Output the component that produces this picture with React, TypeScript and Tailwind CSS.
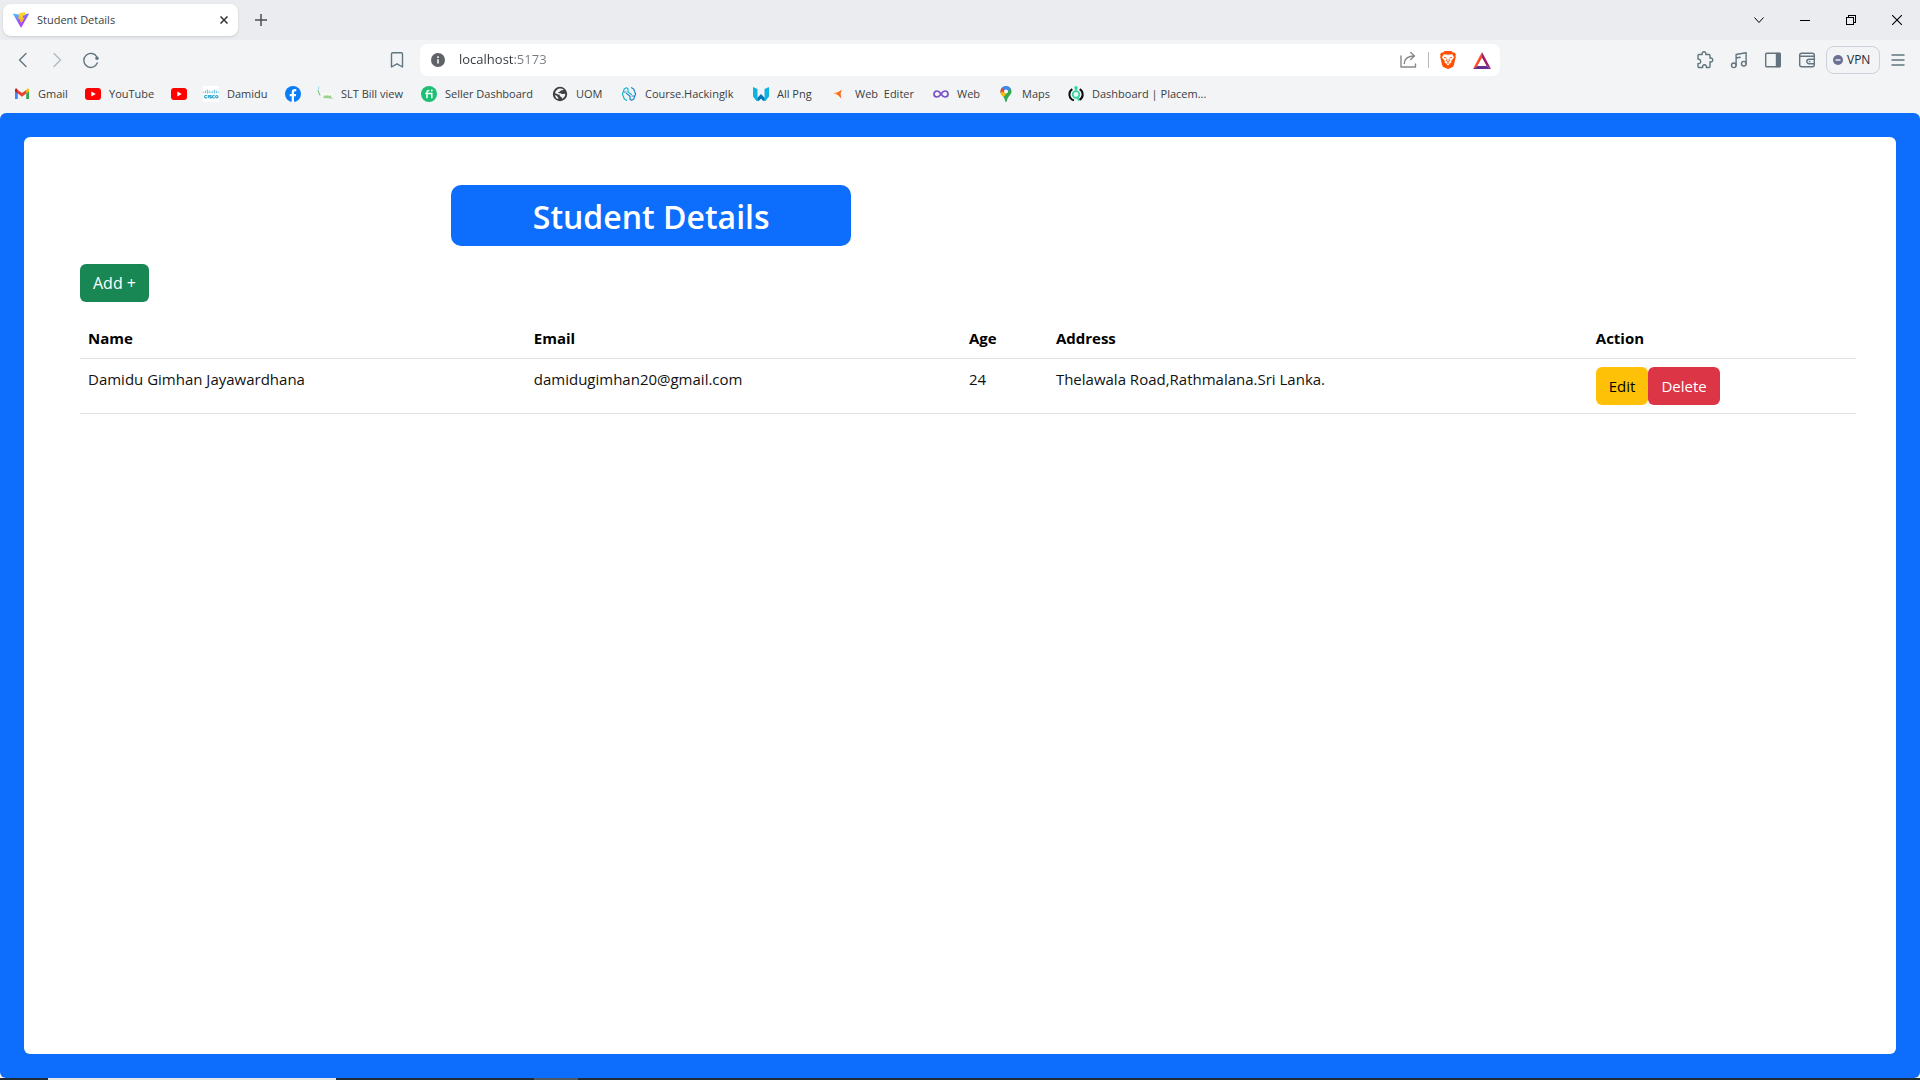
import React from "react";

type IconProps = { className?: string };

const ViteLogo = () => (
  <svg viewBox="0 0 16 16" className="size-4">
    <defs>
      <linearGradient id="viteBody" x1="0" y1="0" x2="0.6" y2="1">
        <stop offset="0" stopColor="#41d1ff" />
        <stop offset="0.55" stopColor="#8f5bff" />
        <stop offset="1" stopColor="#bd34fe" />
      </linearGradient>
      <linearGradient id="viteBolt" x1="0" y1="0" x2="0" y2="1">
        <stop offset="0" stopColor="#ffdd35" />
        <stop offset="1" stopColor="#ffa800" />
      </linearGradient>
    </defs>
    <path d="M0.3 1.6 8 3l7.700-1.400c.3 0 .4.3.3.5L8.400 15.300c-.2.300-.5.300-.7 0L0 2.100c-.1-.2.1-.5.300-.5z" fill="url(#viteBody)" />
    <path d="M11.800 0 6 1.200 5.300 7.200l2.100-.4-.5 3.100 1.500-.4-1 3.300 4.200-7-2.200.3.900-2.700 2.100-.4z" fill="url(#viteBolt)" />
  </svg>
);

const GmailLogo = () => (
  <svg viewBox="0 0 16 16" className="size-4">
    <path d="M1 3.500V13h2.800V6.600z" fill="#4285f4" />
    <path d="M12.200 6.600V13H15V4z" fill="#34a853" />
    <path d="M12.200 3.900v3.600L15 5.400V4c0-1.500-1.300-1.900-2.200-1z" fill="#fbbc04" />
    <path d="M3.800 7.500V3.900L8 7l4.200-3.100v3.600L8 10.700z" fill="#ea4335" />
    <path d="M1 4v1.400l2.800 2.100V3.900L3.200 3C2.200 2.200 1 2.600 1 4z" fill="#c5221f" />
  </svg>
);

const YouTubeLogo = () => (
  <svg viewBox="0 0 16 16" className="size-4">
    <rect x="0" y="2" width="16" height="12" rx="3" fill="#f00" />
    <path d="M6.300 5.400v5.200L10.800 8z" fill="#fff" />
  </svg>
);

const CiscoLogo = () => (
  <svg viewBox="0 0 16 16" className="size-4">
    <rect width="16" height="16" fill="#fff" />
    <g stroke="#59b9dc" strokeWidth="0.9">
      <path d="M0.800 5.500v1.500M2.600 4.600v2.600M4.400 3.600v4M6.200 4.600v2.600M8 5.500v1.500M9.800 4.600v2.600M11.600 3.600v4M13.400 4.600v2.600M15.200 5.500v1.500" />
    </g>
    <g fill="none" stroke="#2aa5d2" strokeWidth="1.200">
      <path d="M4 9.500H2.700a1.200 1.200 0 0 0 0 2.400H4M5.300 9v3.300M8.600 9.500H7c-.7 0-.7 1.100 0 1.200l.9.100c.8.100.8 1.200 0 1.200H6.500M11.600 9.500h-1a1.200 1.200 0 0 0 0 2.400h1" />
      <circle cx="13.800" cy="10.700" r="1.200" />
    </g>
  </svg>
);

const FacebookLogo = () => (
  <svg viewBox="0 0 16 16" className="size-4">
    <circle cx="8" cy="8" r="8" fill="#0a7cf5" />
    <path d="M6.700 15.900V10.300H4.700V8h2V6.200c0-2 1.200-3.100 3-3.100.6 0 1.300.1 1.600.2v1.900h-1c-1 0-1.300.6-1.300 1.200V8h2.200l-.4 2.300H9v5.600a8 8 0 0 1-2.300 0z" fill="#fff" />
  </svg>
);

const SltLogo = () => (
  <svg viewBox="0 0 16 16" className="size-4">
    <rect x="5" y="7" width="11" height="6" fill="#f8faf8" />
    <path d="M1.200 4.500 1.800.5" stroke="#8fd3ec" strokeWidth="0.900" />
    <path d="M1 4.500l2 5" stroke="#65c465" strokeWidth="1" />
    <path d="M6.500 12.300 7.800 9.500l1 2.800 1-2.800 1.200 2.800V9.500l1.500 2.800 1-2.800v2.800h2M6.500 11h8" fill="none" stroke="#8ecb83" strokeWidth="0.900" />
  </svg>
);

const FiverrLogo = () => (
  <svg viewBox="0 0 16 16" className="size-4">
    <circle cx="8" cy="8" r="8" fill="#1dbf73" />
    <path d="M6 12.300V6.300C6 5 6.700 4.300 8.300 4.400M4.300 7.400h6.500v4.900" fill="none" stroke="#fff" strokeWidth="1.500" />
    <circle cx="10.800" cy="4.600" r="1" fill="#fff" />
  </svg>
);

const GlobeLogo = () => (
  <svg viewBox="0 0 16 16" className="size-4">
    <circle cx="8" cy="8" r="7.200" fill="#3c4043" />
    <path d="M7.500 2.600c1.500-.3 3 .1 4.200 1-.6.900-1.500.8-2.500.9-.9.200-.8.900-1.500 1.200-.8.300-1.400.2-1.500.9 0 .7 1.200.7 2.100.6.900 0 1 .7 1.700.8.900.1 1.400-.5 2.300-.3.600.2 1 .500 1 .9-.2 1.700-1.400 3.300-3 4.100-.6-.2-.4-1.100-.9-1.600-.6-.6-1.500-.5-1.600-1.300 0-.9-.4-1.200-1.400-1.300C5 8.300 4.200 7.400 3 7.300c.3-2.300 2.200-4.300 4.500-4.700z" fill="#f2f4f6" />
    <path d="M3 9.200c1 0 1.900.5 2.300 1.300.3.700 1.100.800 1.100 1.600 0 .5-.2.900-.5 1C4.300 12.400 3.100 11 3 9.200z" fill="#f2f4f6" />
  </svg>
);

const HackingLogo = () => (
  <svg viewBox="0 0 16 16" className="size-4" fill="none" strokeLinecap="round" strokeLinejoin="round" strokeWidth="1.200">
    <path d="M5.500 14.300 3.300 13 2.400 10.500 1.400 8l1-2.500.8-2.500 2.200-1.300 1.600 1v3.200l3.600 2.600" stroke="#16bccb" />
    <path d="M10.500 1.700 12.700 3l.9 2.500 1 2.500-1 2.500-.8 2.500-2.200 1.300-1.600-1v-3L5.400 7.400M3 6h2M13 10h-2" stroke="#2385c9" />
  </svg>
);

const AllPngLogo = () => (
  <svg viewBox="0 0 16 16" className="size-4">
    <path d="M0 1l4.500 2v9L8 8.500l3.500 3.500V3L16 1v9.500L12.500 15h-2L8 12.500 5.500 15h-2L0 10.500z" fill="#10b3e0" />
    <path d="m4.300 12 3.700-4 3.700 4L10.500 15 8 12.500 5.500 15z" fill="#0873b9" />
  </svg>
);

const EditerLogo = () => (
  <svg viewBox="0 0 16 16" className="size-4">
    <path d="M2.300 7.300 8 5.800v3.800z" fill="#ffa033" />
    <path d="M10.800 3.500 5.500 7.600l4.800 4.900-.7-4.800z" fill="#ff6a1a" />
  </svg>
);

const InfinityLogo = () => (
  <svg viewBox="0 0 16 16" className="size-4">
    <path d="M8 8C6.500 5.800 5.500 5 4 5a3 3 0 0 0 0 6c1.500 0 2.500-.8 4-3s2.500-3 4-3a3 3 0 0 1 0 6c-1.500 0-2.500-.8-4-3z" fill="none" stroke="#7a4fc9" strokeWidth="1.700" />
  </svg>
);

const MapsLogo = () => (
  <svg viewBox="0 0 16 16" className="size-4">
    <defs>
      <clipPath id="pin">
        <path d="M8 0a5.500 5.500 0 0 1 5.500 5.500c0 3.200-3.700 4.700-4.600 9.200-.3 1.700-1.500 1.700-1.800 0C6.200 10.200 2.500 8.700 2.500 5.500A5.500 5.500 0 0 1 8 0z" />
      </clipPath>
    </defs>
    <g clipPath="url(#pin)">
      <rect width="16" height="16" fill="#34a853" />
      <path d="M2 7 6 6l2 2-3.500 4z" fill="#fbbc04" />
      <path d="M2 7.500V3l2-1.500L8 5 4.500 9z" fill="#ea4335" />
      <path d="M2 7.500 4.500 5.500 8 8l-3.500 4z" fill="#fbbc04" />
      <path d="M3.500 1.500 8 5.500 13 3 11 0H5z" fill="#4285f4" />
    </g>
    <circle cx="8" cy="5.500" r="2" fill="#fff" />
  </svg>
);

const PlacementLogo = () => (
  <svg viewBox="0 0 16 16" className="size-4" fill="none">
    <path d="M4.300 3.200a6.200 6.200 0 0 0 1.700 11.200M11.700 3.200a6.200 6.200 0 0 1-.2 10.700" stroke="#0b0b0b" strokeWidth="2" />
    <circle cx="8" cy="8.500" r="3.300" stroke="#2fd6a0" strokeWidth="1.700" />
    <path d="M8 2v3M9.500 11l1.200 3.800" stroke="#2fd6a0" strokeWidth="1.600" />
    <circle cx="8" cy="1.700" r="1.700" fill="#2fd6a0" />
  </svg>
);

const Stroke = ({ className = "", children }: IconProps & { children: React.ReactNode }) => (
  <svg
    viewBox="0 0 20 20"
    className={"size-5 shrink-0 " + className}
    fill="none"
    stroke="currentColor"
    strokeWidth="1.400"
    strokeLinecap="round"
    strokeLinejoin="round"
  >
    {children}
  </svg>
);

const BraveLogo = () => (
  <svg viewBox="0 0 16 18" className="h-[18px] w-4">
    <path d="M4.500 0h7l1.300 1.500 1.500-.1L16 3.300l-.6 1.500.4 1.300-2 8.100c-.3 1-.8 1.400-1.600 2L8 18l-4.200-1.800c-.8-.6-1.300-1-1.600-2L.2 6.100l.4-1.300L0 3.300l1.700-1.900 1.500.1z" fill="#ff5000" />
    <path d="M3.800 3.200 8 3.800l4.200-.6 1.600 2.700c.2.600 0 1-.3 1.400l-2.400 2.600c.4.600.5 1.200.1 1.600L9.600 13 8 14.600 6.400 13l-1.600-1.500c-.4-.4-.3-1 .1-1.600L2.500 7.300c-.3-.4-.5-.8-.3-1.400z" fill="#fff" />
    <path d="M4 6.300l2.500.9M12 6.300l-2.500.9M7 8l-.4 2L8 11l1.400-1L9 8M6.500 12.500 8 11.700l1.500.8" fill="none" stroke="#ff5000" strokeWidth="0.900" />
  </svg>
);

const BatLogo = () => (
  <svg viewBox="0 0 18 17" className="h-[17px] w-[18px]">
    <path d="M9 0 0 17l4.500-3L9 6z" fill="#ff4724" />
    <path d="M9 0v6l4.500 8 4.500 3z" fill="#9e1f63" />
    <path d="M0 17h18l-4.500-3h-9z" fill="#662d91" />
    <path d="m9 6-4.500 8h9z" fill="#fff" />
  </svg>
);

type Bookmark = { label: string; name: string; icon: React.ReactNode; width: string };

const bookmarks: Bookmark[] = [
  { label: "Gmail", name: "Gmail", icon: <GmailLogo />, width: "w-[71px]" },
  { label: "YouTube", name: "YouTube", icon: <YouTubeLogo />, width: "w-[86px]" },
  { label: "", name: "YouTube channel", icon: <YouTubeLogo />, width: "w-8" },
  { label: "Damidu", name: "Damidu", icon: <CiscoLogo />, width: "w-[82px]" },
  { label: "", name: "Facebook", icon: <FacebookLogo />, width: "w-8" },
  { label: "SLT Bill view", name: "SLT Bill view", icon: <SltLogo />, width: "w-[104px]" },
  { label: "Seller Dashboard", name: "Seller Dashboard", icon: <FiverrLogo />, width: "w-[131px]" },
  { label: "UOM", name: "UOM", icon: <GlobeLogo />, width: "w-[69px]" },
  { label: "Course.Hackinglk", name: "Course.Hackinglk", icon: <HackingLogo />, width: "w-[132px]" },
  { label: "All Png", name: "All Png", icon: <AllPngLogo />, width: "w-[78px]" },
  { label: "Web\u00a0 Editer", name: "Web Editer", icon: <EditerLogo />, width: "w-[102px]" },
  { label: "Web", name: "Web", icon: <InfinityLogo />, width: "w-[65px]" },
  { label: "Maps", name: "Maps", icon: <MapsLogo />, width: "w-[70px]" },
  { label: "Dashboard | Placem...", name: "Dashboard", icon: <PlacementLogo />, width: "w-[150px]" },
];

const TabStrip = () => (
  <div className="flex h-10 items-center justify-between bg-[#ebecf0] pl-[3px]">
    <div className="flex items-center">
      <div className="flex h-8 w-[235px] items-center rounded-lg bg-white pr-2 pl-[10px] shadow-sm">
        <ViteLogo />
        <span className="ml-2 flex-1 text-[11px] text-[#3b3e42]">Student Details</span>
        <button aria-label="Close tab" className="flex size-3 items-center justify-center text-[#333]">
          <svg viewBox="0 0 8 8" className="size-2" stroke="currentColor" strokeWidth="1.500">
            <path d="m.5.5 7 7m0-7-7 7" />
          </svg>
        </button>
      </div>
      <button aria-label="New tab" className="ml-4 flex size-[14px] items-center justify-center text-[#4a4d52]">
        <svg viewBox="0 0 12 12" className="size-3" stroke="currentColor" strokeWidth="1.500">
          <path d="M6 0v12M0 6h12" />
        </svg>
      </button>
    </div>
    <div className="flex h-full text-black">
      <button aria-label="Search tabs" className="flex w-[46px] items-center justify-center">
        <svg viewBox="0 0 10 10" className="size-[10px]" fill="none" stroke="currentColor" strokeWidth="1">
          <path d="m.5 2.500 4.500 5 4.500-5" />
        </svg>
      </button>
      <button aria-label="Minimize" className="flex w-[46px] items-center justify-center">
        <span className="h-px w-[10px] bg-black" />
      </button>
      <button aria-label="Restore" className="flex w-[46px] items-center justify-center">
        <svg viewBox="0 0 10 10" className="size-[10px]" fill="none" stroke="currentColor" shapeRendering="crispEdges">
          <path d="M.5 2.500h7v7h-7zM2.500 2.500v-2h7v7h-2" />
        </svg>
      </button>
      <button aria-label="Close" className="flex w-[46px] items-center justify-center">
        <svg viewBox="0 0 10 10" className="size-[10px]" stroke="currentColor" strokeWidth="1.100">
          <path d="m0 0 10 10M10 0 0 10" />
        </svg>
      </button>
    </div>
  </div>
);

const Toolbar = () => (
  <div className="flex h-10 items-center">
    <div className="flex w-[21.875%] items-center px-[13px] text-[#62757e]">
      <button aria-label="Back">
        <Stroke><path d="M13 3.500 6.500 10l6.500 6.500" /></Stroke>
      </button>
      <button aria-label="Forward" className="ml-[14px] opacity-45">
        <Stroke><path d="M7 3.500 13.500 10 7 16.500" /></Stroke>
      </button>
      <button aria-label="Reload" className="ml-[14px]">
        <Stroke>
          <path d="M16 7.200a7 7 0 1 0 .3 5.800" />
          <circle cx="16" cy="8.300" r="1.700" fill="currentColor" stroke="none" />
        </Stroke>
      </button>
      <button aria-label="Bookmark this page" className="ml-auto">
        <Stroke><path d="M4.500 4a1.200 1.200 0 0 1 1.200-1.200h8.600A1.200 1.200 0 0 1 15.500 4v13L10 13.800 4.500 17z" /></Stroke>
      </button>
    </div>
    <div className="flex h-8 w-[56.25%] items-center rounded-lg bg-white pr-[9px] pl-[11px]">
      <svg viewBox="0 0 14 14" className="size-[14px]">
        <circle cx="7" cy="7" r="7" fill="#5f6368" />
        <path d="M7 6.200v4.300M7 3.300v1.600" stroke="#fff" strokeWidth="1.500" />
      </svg>
      <input
        aria-label="Address"
        defaultValue="localhost:5173"
        className="ml-[14px] min-w-0 flex-1 bg-linear-to-r from-[#333639] from-[54px] to-[#777b80] to-[54px] bg-clip-text text-[13px] text-transparent caret-black outline-none"
      />
      <button aria-label="Share" className="text-[#85888c]">
        <Stroke>
          <path d="M3 6v11h14.500V14M6.300 13.500c.3-4.500 3.200-7.500 10-7.500M12.700 2.500 16.500 6l-3.800 3.500" />
        </Stroke>
      </button>
      <span className="ml-[10px] h-4 w-px bg-[#b5b8bc]" />
      <button aria-label="Brave Shields" className="ml-[11px]"><BraveLogo /></button>
      <button aria-label="Brave Rewards" className="ml-[17px]"><BatLogo /></button>
    </div>
    <div className="flex w-[21.875%] items-center justify-end gap-[14px] pr-3 text-[#62757e]">
      <button aria-label="Extensions">
        <Stroke>
          <path d="M3 5.500a1 1 0 0 1 1-1h3.200c-.5-1.600.4-2.700 1.800-2.700s2.300 1.100 1.800 2.700H14a1 1 0 0 1 1 1v2.700c1.600-.5 2.700.4 2.700 1.800s-1.100 2.300-2.700 1.800v4.700a1 1 0 0 1-1 1h-2.700c.4-1.500-.3-2.700-1.800-2.700s-2.200 1.200-1.800 2.700H4a1 1 0 0 1-1-1v-3c1.600.4 2.700-.4 2.700-1.800S4.600 8.600 3 9z" />
        </Stroke>
      </button>
      <button aria-label="Playlist">
        <Stroke>
          <circle cx="4.800" cy="15.300" r="2.300" />
          <circle cx="14.800" cy="13.700" r="2.300" />
          <path d="M7.100 15.300V4.500l10-1.700v10.900M7.100 8l4-.7" />
        </Stroke>
      </button>
      <button aria-label="Sidebar">
        <Stroke>
          <rect x="2.700" y="3.200" width="14.600" height="13.600" rx="1" />
          <path d="M13.500 3.500h3.500v13h-3.500z" fill="currentColor" />
        </Stroke>
      </button>
      <button aria-label="Wallet">
        <Stroke>
          <rect x="2.700" y="3.200" width="14.600" height="13.600" rx="2" />
          <path d="M3 6.300h13.800M17 9.300h-5a2.200 2.200 0 0 0 0 4.400h5M12.500 11.500h.3" />
        </Stroke>
      </button>
      <button className="-mr-1 -ml-[5px] flex h-7 w-[54px] shrink-0 items-center gap-1 rounded-lg border border-[#ccd2d9] pl-[6px] text-[12px] text-[#26292d]">
        <svg viewBox="0 0 10 10" className="size-[10px] shrink-0">
          <circle cx="5" cy="5" r="5" fill="#6b7094" />
          <path d="M2.500 5h5" stroke="#fff" strokeWidth="1.300" />
        </svg>
        VPN
      </button>
      <button aria-label="Menu" className="-ml-[2px]">
        <Stroke><path d="M4 5h12M4 10h12M4 15h12" /></Stroke>
      </button>
    </div>
  </div>
);

const BookmarkBar = () => (
  <nav aria-label="Bookmarks" className="flex h-[33px] items-center pb-[5px] pl-[14px]">
    {bookmarks.map((b) => (
      <a
        key={b.name}
        href="#"
        aria-label={b.name}
        className={"flex shrink-0 items-center gap-2 text-[11px] whitespace-nowrap text-[#3b3e42] " + b.width}
      >
        {b.icon}
        {b.label && <span>{b.label}</span>}
      </a>
    ))}
  </nav>
);

const students = [
  { name: "Damidu Gimhan Jayawardhana", email: "damidugimhan20@gmail.com", age: 24, address: "Thelawala Road,Rathmalana.Sri Lanka." },
];

const columns = [
  { title: "Name", width: "w-[25.1%]" },
  { title: "Email", width: "w-[24.5%]" },
  { title: "Age", width: "w-[4.9%]" },
  { title: "Address", width: "w-[30.4%]" },
  { title: "Action", width: "w-[15.1%]" },
];

const StudentPage = () => (
  <main className="flex flex-1 rounded-md bg-[#0d6efd] p-6">
    <div className="flex-1 rounded-md bg-white pt-12 pr-10 pl-14 text-[15px] leading-6">
      <h1 className="ml-[20.9%] w-[400px] rounded-[10px] bg-[#0d6efd] pt-2 pb-[5px] text-center text-[32px] leading-[48px] font-semibold text-white">
        Student Details
      </h1>
      <button className="mt-[18px] block h-[38px] rounded-md bg-[#198754] px-[13px] text-[16px] text-white">Add +</button>
      <table className="mt-4 w-full table-fixed border-collapse text-left">
        <thead>
          <tr className="border-b border-[#dee2e6] text-black">
            {columns.map((c) => (
              <th key={c.title} className={"p-2 font-bold " + c.width}>{c.title}</th>
            ))}
          </tr>
        </thead>
        <tbody>
          {students.map((s) => (
            <tr key={s.email} className="border-b border-[#dee2e6] align-top text-[#111]">
              <td className="p-2">{s.name}</td>
              <td className="p-2">{s.email}</td>
              <td className="p-2">{s.age}</td>
              <td className="p-2">{s.address}</td>
              <td className="p-2">
                <div className="flex">
                  <button className="h-[38px] rounded-md bg-[#ffc107] px-[13px] text-black">Edit</button>
                  <button className="h-[38px] rounded-md bg-[#dc3545] px-[13px] text-white">Delete</button>
                </div>
              </td>
            </tr>
          ))}
        </tbody>
      </table>
    </div>
  </main>
);

export default function App() {
  return (
    <div className="flex min-h-screen flex-col bg-white font-['Open_Sans','Noto_Sans',sans-serif]">
      <header className="bg-[#f2f4f6]">
        <TabStrip />
        <Toolbar />
        <BookmarkBar />
      </header>
      <StudentPage />
      <div className="flex h-[2px] bg-[#1d2b36]">
        <span className="ml-12 w-72 bg-[#e6e6e6]" />
        <span className="ml-[198px] w-11 bg-[#4d5963]" />
      </div>
    </div>
  );
}
